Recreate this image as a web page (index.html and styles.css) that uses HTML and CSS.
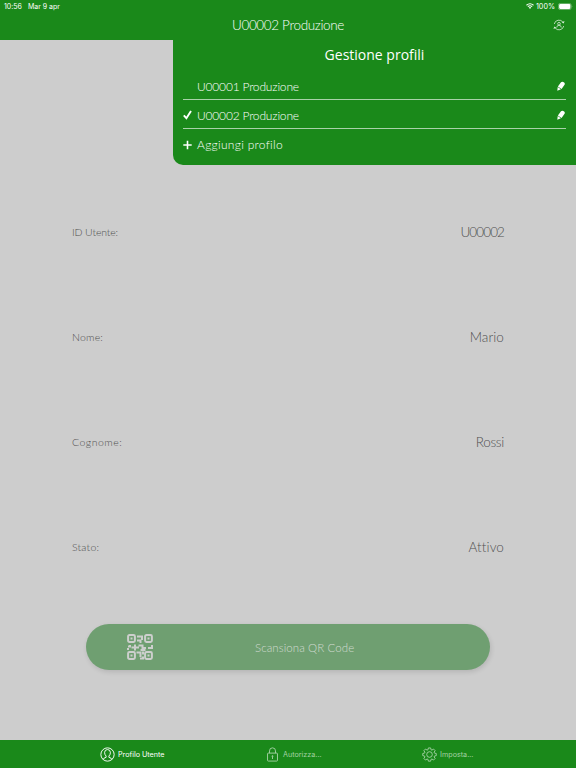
FILE: index.html
```
<!DOCTYPE html>
<html lang="it">
<head>
  <meta charset="UTF-8">
  <meta name="viewport" content="width=device-width, initial-scale=1.0">
  <title>Profilo Utente</title>
  <link rel="stylesheet" href="styles.css">
</head>
<body>
  <header class="header">
    <div class="status-bar">
      <span class="time">10:56</span>
      <span class="date">Mar 9 apr</span>
      <svg class="wifi" viewBox="0 0 16 12" fill="none" stroke="#fff" stroke-width="2.2">
        <path d="M1 4.5Q8-1.5 15 4.5M3.7 7.3Q8 3.8 12.3 7.3"/>
        <path d="M5.5 8.9Q8 7 10.5 8.9L8 11.8Z" fill="#fff" stroke="none"/>
      </svg>
      <span class="percent">100%</span>
      <svg class="battery" viewBox="0 0 15 7">
        <rect x=".4" y=".4" width="12.7" height="6.2" rx="1.8" fill="none" stroke="#8cc58c" stroke-width=".7"/>
        <rect x="1.1" y="1.1" width="11.3" height="4.8" rx="1.1" fill="#fff"/>
        <path d="M13.8 2.4q1 1.1 0 2.2z" fill="#8cc58c"/>
      </svg>
    </div>
    <div class="title-bar">
      <h1 class="title">U00002 Produzione</h1>
      <svg class="switch-user" viewBox="0 0 24 24" fill="none" stroke="#d5ead5" stroke-width="1.6">
        <path d="M2.5 10A9.7 9.700 0 0 1 20 6.500M21.500 14A9.700 9.700 0 0 1 4 17.500"/>
        <path d="M23 4l-1.500 5-4-2.500zM1 20l1.500-5 4 2.500z" fill="#d5ead5" stroke="none"/>
        <circle cx="12" cy="9.5" r="2.7"/>
        <path d="M7.500 17q0-4.500 4.500-4.500t4.500 4.500"/>
      </svg>
    </div>
  </header>

  <main class="content">
    <div class="row"><span class="label label-id">ID Utente:</span><span class="value value-id">U00002</span></div>
    <div class="row"><span class="label">Nome:</span><span class="value">Mario</span></div>
    <div class="row"><span class="label label-surname">Cognome:</span><span class="value value-surname">Rossi</span></div>
    <div class="row"><span class="label">Stato:</span><span class="value">Attivo</span></div>

    <button class="scan-btn">
      <svg class="qr" viewBox="0 0 26 26" fill="none" stroke="#cdcfcd" stroke-width="2">
        <rect x="1.1" y="1.1" width="6.8" height="6.8" rx="1.3"/>
        <rect x="18.1" y="1.1" width="6.8" height="6.8" rx="1.3"/>
        <rect x="1.1" y="18.1" width="6.8" height="6.8" rx="1.3"/>
        <rect x="18.1" y="18.1" width="6.8" height="6.8" rx="1.3"/>
        <path d="M3.5 4.5h2M20.5 4.5h2M3.5 21.5h2M20.5 21.5h2"/>
        <path d="M10 2.500h5V6M10 6.500h3.500V9M0 15h2M1 12.500h2V11M4.500 13.500h7.500M8 10.500v6M11.500 11.500h4V14H19M13.500 16h5M21 14h5M25 11v3.500M9.500 18.500H13.500V23M16 17.500V20.500M13 24.500h3V22.500"/>
      </svg>
      <span class="scan-text">Scansiona QR Code</span>
    </button>
  </main>

  <section class="profiles">
    <h2 class="profiles-title">Gestione profili</h2>
    <div class="profile">
      <span class="mark"></span>
      <span class="name">U00001 Produzione</span>
      <svg class="pencil" viewBox="0 0 8 10" fill="#fff"><path d="M4 1.3Q5 .2 6.3.9 8.300 1.800 7.700 3.4L4.600 8 .9 5.500zM.7 6 3.900 8.200 .3 9.800z"/></svg>
    </div>
    <div class="profile">
      <svg class="mark" viewBox="0 0 9 10" fill="none" stroke="#fff" stroke-width="1.9"><path d="M.8 5.3 3.4 8.2 8 1"/></svg>
      <span class="name">U00002 Produzione</span>
      <svg class="pencil" viewBox="0 0 8 10" fill="#fff"><path d="M4 1.3Q5 .2 6.3.9 8.300 1.800 7.700 3.4L4.600 8 .9 5.500zM.7 6 3.900 8.200 .3 9.800z"/></svg>
    </div>
    <div class="profile add">
      <svg class="mark" viewBox="0 0 9 10" fill="none" stroke="#fff" stroke-width="1.6"><path d="M4.5 .8v8.400M.3 5h8.400"/></svg>
      <span class="name name-add">Aggiungi profilo</span>
    </div>
  </section>

  <nav class="tabs">
    <a class="tab active">
      <svg class="tab-icon" viewBox="0 0 16 16" fill="none" stroke="#fff" stroke-width="1">
        <circle cx="8" cy="8" r="7.1"/>
        <path d="M3.3 13.2q.5-1.500 3.200-2.200V9.700Q4.800 8 4.900 5.700 5.200 2.700 8 2.700t3.100 3Q11.200 8 9.500 9.700V11q2.700.7 3.200 2.200"/>
      </svg>
      <span class="tab-text">Profilo Utente</span>
    </a>
    <a class="tab">
      <svg class="tab-icon" viewBox="0 0 16 16" fill="none" stroke="#a3d1a3" stroke-width="1">
        <rect x="2.700" y="6.5" width="10.600" height="8.500" rx=".8"/>
        <path d="M4.800 6.500V4.200q0-3.300 3.200-3.300t3.200 3.300V6.500M8 10v2.800"/>
        <circle cx="8" cy="9.8" r=".6"/>
      </svg>
      <span class="tab-text">Autorizza...</span>
    </a>
    <a class="tab">
      <svg class="tab-icon" viewBox="0 0 16 16" fill="none" stroke="#a3d1a3" stroke-width="1" stroke-linejoin="round">
        <path d="M6.800 1h2.400l.4 1.900 1 .4 1.700-1.100L14 3.900l-1.100 1.600.4 1 1.900.4v2.300l-1.900.4-.4 1L14 12.200l-1.700 1.700-1.700-1.100-1 .4-.4 1.900H6.800l-.4-1.900-1-.4-1.700 1.100L2 12.200l1.100-1.600-.4-1-1.900-.4V6.900l1.900-.4.4-1L2 3.900l1.700-1.700 1.700 1.100 1-.4z"/>
        <circle cx="8" cy="8" r="3"/>
      </svg>
      <span class="tab-text">Imposta...</span>
    </a>
  </nav>
</body>
</html>
```
FILE: styles.css
```
* {
  box-sizing: border-box;
}

body {
  margin: 0;
  position: relative;
  height: 768px;
  display: flex;
  flex-direction: column;
  overflow: hidden;
  background: #cdcdcd;
  color: #fff;
  font-family: "Century Gothic", Lato, sans-serif;
  font-variant-ligatures: none;
}

.header {
  height: 40px;
  background: #1a891a;
}

.status-bar {
  display: flex;
  align-items: center;
  height: 12px;
  padding: 0 3px 0 4px;
  font-family: Inter, sans-serif;
  font-size: 7px;
}

.date {
  margin-left: 6px;
}

.wifi {
  width: 8px;
  height: 6px;
  margin-left: auto;
}

.percent {
  margin: 0 3px 0 2px;
  font-size: 7.2px;
}

.battery {
  width: 15px;
  height: 7px;
}

.title-bar {
  display: grid;
  grid-template-columns: 1fr auto 1fr;
  align-items: center;
  height: 26px;
}

.title {
  grid-column: 2;
  margin: 0;
  font-size: 13.5px;
  font-weight: 300;
  letter-spacing: -0.35px;
}

.switch-user {
  justify-self: end;
  width: 12px;
  height: 12px;
  margin-right: 11px;
}

.content {
  flex: 1;
  padding: 139px 72px 0;
}

.row {
  display: flex;
  align-items: center;
  justify-content: space-between;
  height: 105px;
  color: #505050;
  font-weight: 300;
}

.label {
  font-size: 10.5px;
  letter-spacing: 0.2px;
}

.label-id {
  letter-spacing: -0.15px;
}

.label-surname {
  letter-spacing: 0.5px;
}

.value {
  font-size: 13.5px;
  letter-spacing: 0.1px;
}

.value-id {
  letter-spacing: -0.9px;
}

.value-surname {
  letter-spacing: -0.3px;
}

.scan-btn {
  display: flex;
  align-items: center;
  width: 404px;
  height: 46px;
  margin: 25px 0 0 14px;
  padding: 0 0 0 41px;
  border: none;
  border-radius: 23px;
  background: #6f9f71;
  box-shadow: 1px 2px 5px rgba(0, 0, 0, 0.12);
  color: #d0dad0;
  font-family: inherit;
  font-size: 11.5px;
  font-weight: 300;
  letter-spacing: 0.08px;
}

.qr {
  width: 26px;
  height: 26px;
}

.scan-text {
  margin-left: 102px;
}

/* dropdown over the page */
.profiles {
  position: absolute;
  top: 39px;
  left: 173px;
  right: 0;
  height: 126px;
  padding: 0 10px;
  border-bottom-left-radius: 10px;
  background: #1a891a;
}

.profiles-title {
  height: 32px;
  margin: 0;
  font-family: "Open Sans", sans-serif;
  font-size: 14px;
  font-weight: 400;
  line-height: 32px;
  text-align: center;
}

.profile {
  display: flex;
  align-items: center;
  height: 29px;
  padding-top: 2px;
  border-bottom: 1px solid #a9d2a9;
}

.add {
  height: 31px;
  padding-top: 0;
  border-bottom: none;
}

.mark {
  width: 9px;
  height: 10px;
  margin-right: 5px;
}

.name {
  font-size: 12px;
  font-weight: 300;
  letter-spacing: -0.18px;
}

.name-add {
  letter-spacing: 0.3px;
}

.pencil {
  width: 8px;
  height: 10px;
  margin: 0 1px 0 auto;
}

.tabs {
  display: grid;
  grid-template-columns: 165px 157px 1fr;
  height: 28px;
  padding-left: 100px;
  background: #1a891a;
}

.tab {
  display: flex;
  align-items: center;
  gap: 3px;
  color: #a3d1a3;
  font-family: Inter, sans-serif;
  font-size: 7.2px;
}

.active {
  color: #fff;
}

.tab-icon {
  width: 15px;
  height: 15px;
}
```
